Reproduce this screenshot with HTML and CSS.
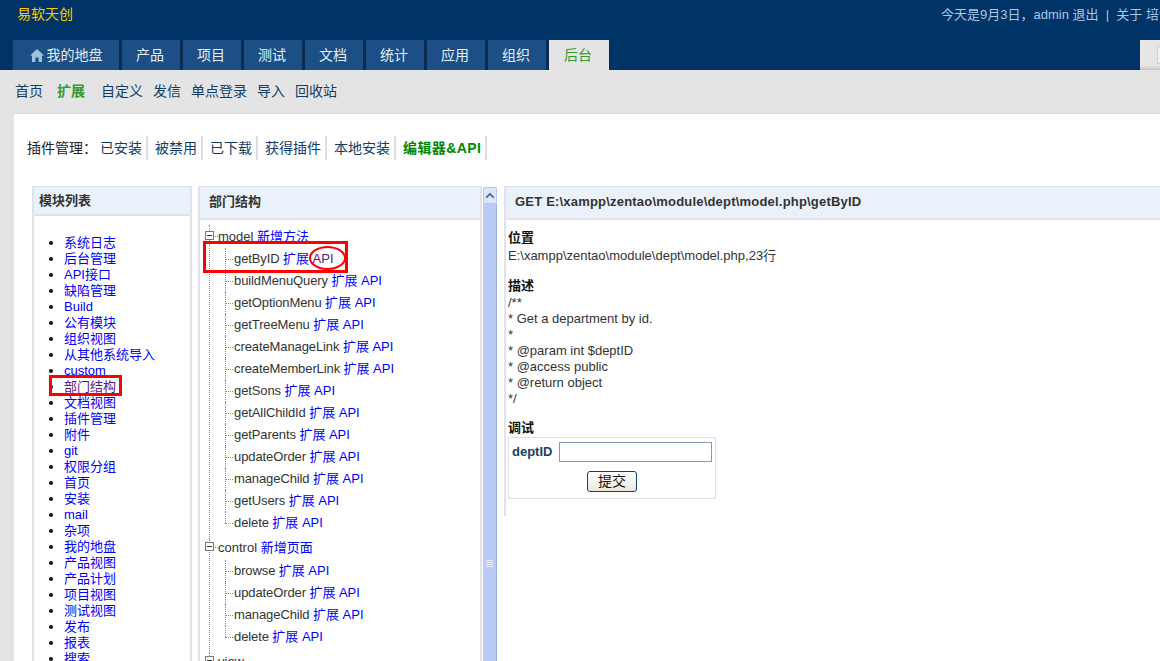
FILE: index.html
```html
<!DOCTYPE html>
<html lang="zh">
<head>
<meta charset="utf-8">
<title>易软天创</title>
<link rel="stylesheet" href="styles.css">
</head>
<body>
<header class="header">
  <div class="topbar">
    <a class="brand">易软天创</a>
    <div class="topinfo">今天是9月3日，admin 退出 &nbsp;|&nbsp; 关于 培训</div>
  </div>
  <div class="tabrow">
    <nav class="tabs">
      <a class="tab tab-home"><svg class="home" viewBox="0 0 14 13"><path d="M7 0 L14 6.6 H12 V13 H8.6 V8.6 H5.4 V13 H2 V6.6 H0 Z"/></svg>我的地盘</a>
      <a class="tab">产品</a>
      <a class="tab">项目</a>
      <a class="tab">测试</a>
      <a class="tab">文档</a>
      <a class="tab">统计</a>
      <a class="tab">应用</a>
      <a class="tab">组织</a>
      <a class="tab tab-active">后台</a>
    </nav>
    <div class="searchtab"><span class="searchbox"></span></div>
  </div>
</header>
<nav class="subnav">
  <a>首页</a><a class="current">扩展</a><a>自定义</a><a>发信</a><a>单点登录</a><a>导入</a><a>回收站</a>
</nav>
<main class="content">
  <div class="pluginbar">
    <span class="pluginlabel">插件管理：</span>
    <a class="pluginitem">已安装</a><a class="pluginitem">被禁用</a><a class="pluginitem">已下载</a><a class="pluginitem">获得插件</a><a class="pluginitem">本地安装</a><a class="pluginitem plugincurrent">编辑器&amp;API</a>
  </div>
  <div class="columns">
    <section class="panel modules">
      <h2 class="panelhead modulehead">模块列表</h2>
      <ul class="modulelist">
        <li><a>系统日志</a></li><li><a>后台管理</a></li><li><a>API接口</a></li><li><a>缺陷管理</a></li><li><a>Build</a></li><li><a>公有模块</a></li><li><a>组织视图</a></li><li><a>从其他系统导入</a></li><li><a>custom</a></li><li><a class="visited">部门结构</a></li><li><a>文档视图</a></li><li><a>插件管理</a></li><li><a>附件</a></li><li><a>git</a></li><li><a>权限分组</a></li><li><a>首页</a></li><li><a>安装</a></li><li><a>mail</a></li><li><a>杂项</a></li><li><a>我的地盘</a></li><li><a>产品视图</a></li><li><a>产品计划</a></li><li><a>项目视图</a></li><li><a>测试视图</a></li><li><a>发布</a></li><li><a>报表</a></li><li><a>搜索</a></li>
      </ul>
      <span class="mark mark-module"></span>
    </section>
    <section class="panel tree">
      <h2 class="panelhead">部门结构</h2>
      <div class="treebody">
        <div class="group">
          <div class="root"><span class="toggle"></span>model <a>新增方法</a></div>
          <ul class="leaves">
            <li>getByID <a>扩展</a> <a class="visited">API</a></li>
            <li>buildMenuQuery <a>扩展</a> <a>API</a></li>
            <li>getOptionMenu <a>扩展</a> <a>API</a></li>
            <li>getTreeMenu <a>扩展</a> <a>API</a></li>
            <li>createManageLink <a>扩展</a> <a>API</a></li>
            <li>createMemberLink <a>扩展</a> <a>API</a></li>
            <li>getSons <a>扩展</a> <a>API</a></li>
            <li>getAllChildId <a>扩展</a> <a>API</a></li>
            <li>getParents <a>扩展</a> <a>API</a></li>
            <li>updateOrder <a>扩展</a> <a>API</a></li>
            <li>manageChild <a>扩展</a> <a>API</a></li>
            <li>getUsers <a>扩展</a> <a>API</a></li>
            <li>delete <a>扩展</a> <a>API</a></li>
          </ul>
        </div>
        <div class="group">
          <div class="root"><span class="toggle"></span>control <a>新增页面</a></div>
          <ul class="leaves">
            <li>browse <a>扩展</a> <a>API</a></li>
            <li>updateOrder <a>扩展</a> <a>API</a></li>
            <li>manageChild <a>扩展</a> <a>API</a></li>
            <li>delete <a>扩展</a> <a>API</a></li>
          </ul>
        </div>
        <div class="group">
          <div class="root"><span class="toggle"></span>view</div>
        </div>
      </div>
      <span class="mark mark-row"></span>
      <span class="mark mark-oval"></span>
    </section>
    <div class="scrollbar">
      <div class="scrollbtn"><svg viewBox="0 0 12 8" class="chev"><path d="M1.5 6.5 L6 2 L10.5 6.5" /></svg></div>
      <div class="scrollthumb"><span class="grip"></span></div>
    </div>
    <section class="panel detail">
      <h2 class="panelhead detailhead">GET E:\xampp\zentao\module\dept\model.php\getByID</h2>
      <div class="detailbody">
        <h3 class="label">位置</h3>
        <p class="path">E:\xampp\zentao\module\dept\model.php,23行</p>
        <h3 class="label label-desc">描述</h3>
        <pre class="doc">/**
* Get a department by id.
*
* @param int $deptID
* @access public
* @return object
*/</pre>
        <h3 class="label label-debug">调试</h3>
        <form class="debugform">
          <div class="debugrow"><label class="debuglabel">deptID</label><span class="debuginput"></span></div>
          <div class="debugsubmit"><span class="submitbtn">提交</span></div>
        </form>
      </div>
    </section>
  </div>
</main>
</body>
</html>
```
FILE: styles.css
```css
* { box-sizing: border-box; }
html, body { margin: 0; padding: 0; }
body {
  width: 1160px;
  height: 661px;
  overflow: hidden;
  background: #e4e4e4;
  font: 13px/16px "Liberation Sans", "Noto Sans CJK SC", sans-serif;
  color: #333;
}
ul { margin: 0; padding: 0; list-style: none; }
h2, h3, p, pre { margin: 0; }

.header { height: 70px; background: #003366; }
.topbar { height: 40px; display: flex; justify-content: space-between; }
.brand { margin: 6px 0 0 17px; font-size: 14px; line-height: 16px; color: #ffcc00; }
.topinfo { width: 219px; margin-top: 7px; overflow: hidden; white-space: nowrap; color: #a9c9e8; font-size: 13px; line-height: 16px; }

.tabrow { height: 30px; display: flex; justify-content: space-between; }
.tabs { display: flex; padding-left: 13px; }
.tab {
  width: 58px; margin-right: 3px; height: 30px; padding-right: 2px;
  background: #1b4f85; color: #e6eef6;
  font-size: 14px; line-height: 30px; text-align: center;
  box-shadow: 3px 0 0 #0b2b50;
}
.tab-home { width: 106px; padding-right: 0; display: flex; align-items: center; justify-content: center; gap: 3px; }
.home { width: 14px; height: 13px; fill: #9cc3dd; }
.tab-active { width: 60px; background: #e4e4e4; color: #339933; box-shadow: none; }
.searchtab { width: 20px; height: 30px; background: linear-gradient(#e6e6e6 85%, #c4c4c4); padding: 6px 0 0 17px; }
.searchbox { display: block; width: 10px; height: 18px; background: #f0f0f0; border: 1px solid #cfcfcf; }

.subnav { height: 43px; display: flex; align-items: center; padding: 0 0 2px 15px; gap: 10px; font-size: 14px; color: #123c66; }
.subnav .current { margin: 0 6px 0 4px; color: #339933; font-weight: bold; }

.content { margin-left: 14px; height: 548px; background: #fff; border-top: 1px solid #dcdcdc; overflow: hidden; }
.pluginbar { display: flex; align-items: center; height: 24px; margin-top: 22px; padding-left: 13px; font-size: 14px; }
.pluginlabel { flex: none; width: 66px; color: #222; white-space: nowrap; }
.pluginitem { flex: none; height: 24px; line-height: 24px; padding: 0 4px 0 7px; border-right: 2px solid #ddd; color: #123c66; }
.plugincurrent { color: #008800; font-weight: bold; letter-spacing: .4px; }

.columns { display: flex; align-items: flex-start; margin: 26px 0 0 18px; }
.panel { flex: none; position: relative; border: 1px solid #e0e3ea; border-width: 1px 2px 0; }
.panelhead { background: #ebf1fb; border-bottom: 2px solid #e0e3ea; font-size: 13px; font-weight: bold; line-height: 16px; color: #333; padding: 7px 0 9px 9px; height: 33px; }
.modules { width: 160px; height: 480px; }
.modulehead { height: 29px; padding: 6px 0 0 5px; }
.modulelist { padding: 19px 0 0 30px; list-style: disc; color: #111; }
.modulelist li { height: 16px; line-height: 16px; }
.modulelist a { color: #0000ff; }
.modulelist .visited, .visited { color: #551a8b; }

.tree { width: 284px; height: 480px; margin-left: 6px; }
.treebody { padding: 8px 0 0 3px; }
.group { position: relative; margin-bottom: 5px; padding-left: 15px; }
.group::before { content: ""; position: absolute; left: 6px; top: -3px; bottom: -5px; border-left: 1px dotted #888; }
.group + .group::before { top: 0; }
.root { position: relative; height: 18px; line-height: 18px; color: #333; }
.root a, .leaves a { color: #0000ff; letter-spacing: 0; }
.root .leaves a.visited, .leaves a.visited { color: #551a8b; }
.root .toggle { position: absolute; left: -13px; top: 3px; width: 9px; height: 9px; border: 1px solid #777; background: linear-gradient(#333, #333) center / 5px 1px no-repeat #fff; z-index: 1; }
.root::before { content: ""; position: absolute; left: -5px; top: 8px; width: 5px; border-top: 1px dotted #888; }
.leaves { margin: 2px 0 0 7px; }
.group + .group .leaves { margin-top: 3px; }
.leaves li { position: relative; height: 22px; line-height: 22px; padding-left: 9px; color: #333; white-space: nowrap; letter-spacing: -.1px; }
.leaves li::before { content: ""; position: absolute; left: 0; top: 11px; width: 8px; border-top: 1px dotted #888; }
.leaves li::after { content: ""; position: absolute; left: 0; top: 0; bottom: 0; border-left: 1px dotted #888; }
.leaves li:last-child::after { bottom: 11px; }

.scrollbar { flex: none; width: 14px; height: 480px; margin-left: 1px; margin-top: 1px; background: #e6ecf8; }
.scrollbtn { height: 17px; background: #dbe6fb; border: 1px solid #b5c8ee; border-radius: 2px; display: flex; align-items: center; justify-content: center; }
.chev { width: 10px; height: 7px; fill: none; stroke: #4d6185; stroke-width: 2; }
.scrollthumb { height: 463px; background: #b9ccf6; border-right: 1px solid #98aedc; position: relative; }
.grip { position: absolute; left: 3px; top: 356px; width: 7px; height: 7px; background: repeating-linear-gradient(#e6ecfb 0 1px, #b9ccf6 1px 2px); }

.detail { width: 660px; height: 330px; margin-left: 7px; border-right: 0; }
.detailhead { padding-left: 9px; letter-spacing: .2px; }
.detailbody { padding: 9px 0 0 2px; color: #333; }
.label { font-size: 13px; font-weight: bold; line-height: 18px; color: #111; }
.path { line-height: 18px; }
.label-desc { margin-top: 12px; }
.doc { font: inherit; line-height: 16px; }
.label-debug { margin-top: 12px; }
.debugform { width: 208px; height: 62px; border: 1px solid #e0e0e0; padding: 4px 3px; }
.debugrow { display: flex; align-items: center; justify-content: space-between; height: 20px; }
.debuglabel { font-weight: bold; color: #1a3f66; }
.debuginput { width: 153px; height: 20px; border: 1px solid #7f9db9; background: #fff; }
.debugsubmit { display: flex; justify-content: center; margin-top: 9px; }
.submitbtn { width: 50px; height: 21px; border: 1px solid #0f3f6e; border-radius: 3px; background: linear-gradient(#fff, #ece9dc); font-size: 14px; line-height: 19px; text-align: center; color: #111; }

.mark { position: absolute; pointer-events: none; }
.mark-module { left: 15px; top: 188px; width: 73px; height: 21px; border: 3px solid #f00; }
.mark-row { left: 3px; top: 54px; width: 145px; height: 32px; border: 3px solid #f00; }
.mark-oval { left: 109px; top: 59px; width: 37px; height: 24px; border: 2px solid #f00; border-radius: 50%; }
```
